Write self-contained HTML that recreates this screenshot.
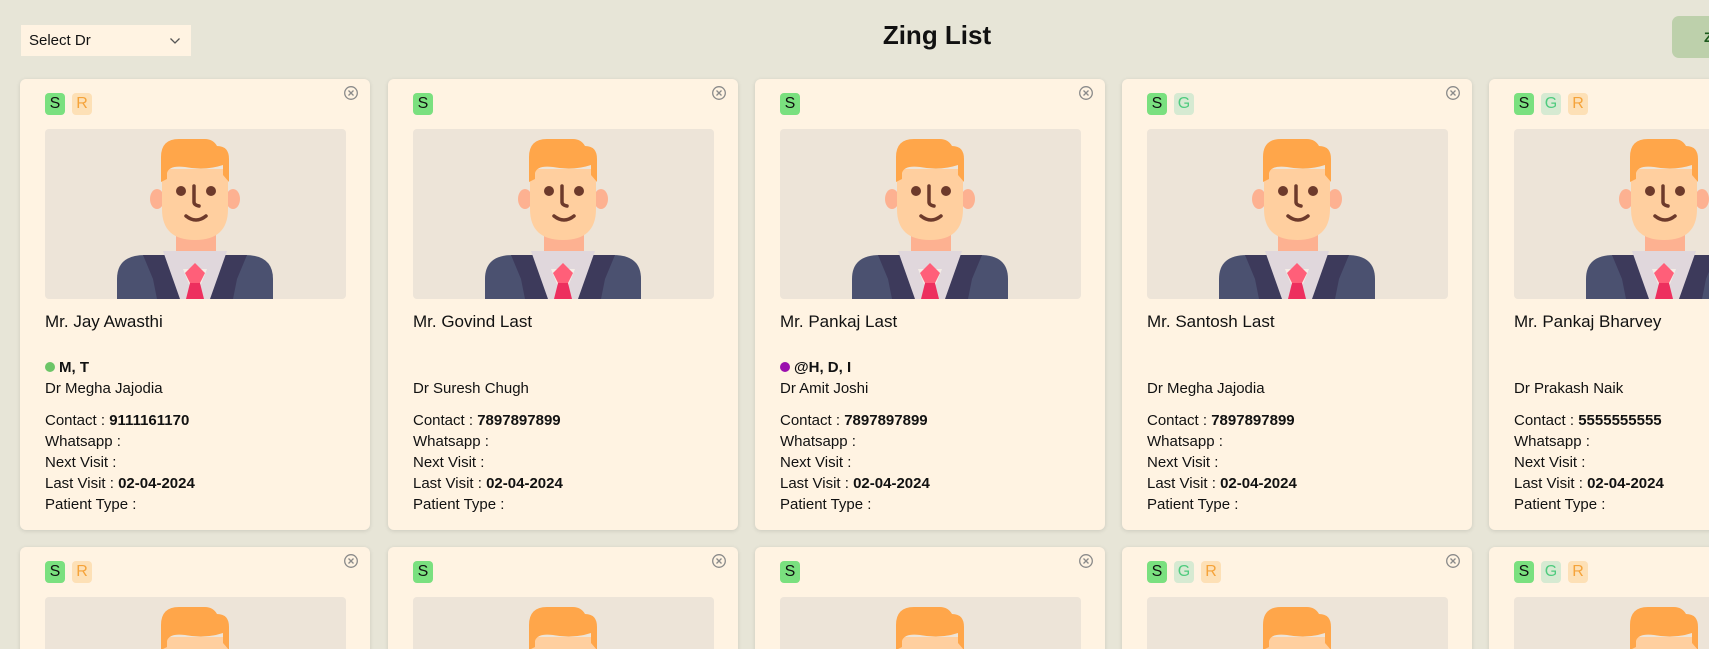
<!DOCTYPE html>
<html style="width:1709px;height:649px;overflow:hidden"><head><meta charset="utf-8"><style>
*{box-sizing:border-box;margin:0;padding:0}
body{width:1709px;height:649px;overflow:hidden;background:#e7e5d7;font-family:"Liberation Sans",sans-serif;color:#111;position:relative}
.sel{position:absolute;left:21px;top:25px;width:170px;height:31px;background:#fff3e2;font-size:15px;line-height:31px;padding-left:8px}
.sel svg{position:absolute;left:148px;top:12px}
h1{position:absolute;left:0;width:1874px;text-align:center;top:20px;font-size:26px;font-weight:bold}
.btn{position:absolute;left:1672px;top:16px;width:120px;height:42px;background:#bdd0ab;border-radius:7px;color:#1d5a1d;font-weight:bold;font-size:14px;line-height:42px;padding-left:32px}
.card{position:absolute;width:350px;height:451px;background:#fff3e2;border-radius:6px;box-shadow:0 1px 4px rgba(0,0,0,.12)}
.badges{position:absolute;left:25px;top:14px;display:flex;gap:7px}
.b{height:22px;min-width:20px;padding:0 3px;border-radius:4px;font-size:16px;line-height:22px;text-align:center}
.bs{background:#7ae07f;color:#111}.bg{background:#d6ead2;color:#4fcb7e}.br{background:#fde0b6;color:#f5a33a}
.x{position:absolute;left:323px;top:6px}
.img{position:absolute;left:25px;top:50px;width:301px;height:170px;background:#ede4d8;border-radius:4px;overflow:hidden}
.t{position:absolute;left:25px;font-size:15px;line-height:21px;white-space:nowrap}
.nm{top:232px;font-size:17px;line-height:22px}
.dot{display:inline-block;width:10px;height:10px;border-radius:50%;margin-right:4px;vertical-align:-0px}
</style></head><body>
<div class="sel">Select Dr<svg width="12" height="8" viewBox="0 0 12 8"><path d="M1.5 1.5l4.5 4.5 4.5-4.5" fill="none" stroke="#555" stroke-width="1.3"/></svg></div>
<h1>Zing List</h1>
<div class="btn">Z</div>

<svg width="0" height="0" style="position:absolute">
<defs>
<g id="av">
<path d="M72 170V150Q72 126 100 126H200Q228 126 228 150V170Z" fill="#4b5170"/>
<path d="M98 126L122 126L150 170L112 170L108 150Z" fill="#3d3a5b"/>
<path d="M202 126L178 126L150 170L188 170L192 150Z" fill="#3d3a5b"/>
<rect x="131" y="98" width="40" height="30" fill="#fdb191"/>
<path d="M118 122L182 122L165 170L135 170Z" fill="#e0d7dc"/>
<path d="M138 140L150 170L162 140Z" fill="#f4ede6"/>
<path d="M150 134L140 144L145 154L155 154L160 144Z" fill="#ff5f79"/>
<path d="M145 154L141 170L159 170L155 154Z" fill="#ed2f5e"/>
<ellipse cx="112" cy="70" rx="7" ry="10" fill="#fdb191"/>
<ellipse cx="188" cy="70" rx="7" ry="10" fill="#fdb191"/>
<path d="M117 40H183V80Q183 111 150 111Q117 111 117 80Z" fill="#ffcf9f"/>
<path d="M116 53V28Q116 10 134 10H160Q168 10 172 17Q184 17 184 30V53L178 46V36Q160 42 140 38Q124 36 122 44V50Z" fill="#ffa64a"/>
<circle cx="136" cy="62" r="5" fill="#6d3a2b"/>
<circle cx="166" cy="62" r="5" fill="#6d3a2b"/>
<path d="M149 57V73Q149 76 154 77" fill="none" stroke="#6d3a2b" stroke-width="3.5" stroke-linecap="round"/>
<path d="M141 87Q151 95 161 87" fill="none" stroke="#6d3a2b" stroke-width="3.5" stroke-linecap="round"/>
</g>
<g id="xi"><circle cx="8" cy="8" r="6.3" fill="none" stroke="#8a8a8a" stroke-width="1.3"/><path d="M5.5 5.5l5 5M10.5 5.5l-5 5" stroke="#8a8a8a" stroke-width="1.3"/></g>
</defs></svg>

<div class="card" style="left:20px;top:79px">
<div class="badges"><span class="b bs">S</span><span class="b br">R</span></div>
<svg class="x" width="16" height="16"><use href="#xi"/></svg>
<div class="img"><svg width="301" height="170"><use href="#av"/></svg></div>
<div class="t nm">Mr. Jay Awasthi</div>
<div class="t" style="top:278px;font-weight:bold"><span class="dot" style="background:#6cc567"></span>M, T</div>
<div class="t" style="top:299px">Dr Megha Jajodia</div>
<div class="t" style="top:331px">Contact : <b>9111161170</b></div>
<div class="t" style="top:352px">Whatsapp :</div>
<div class="t" style="top:373px">Next Visit :</div>
<div class="t" style="top:394px">Last Visit : <b>02-04-2024</b></div>
<div class="t" style="top:415px">Patient Type :</div>
</div>

<div class="card" style="left:388px;top:79px">
<div class="badges"><span class="b bs">S</span></div>
<svg class="x" width="16" height="16"><use href="#xi"/></svg>
<div class="img"><svg width="301" height="170"><use href="#av"/></svg></div>
<div class="t nm">Mr. Govind Last</div>
<div class="t" style="top:299px">Dr Suresh Chugh</div>
<div class="t" style="top:331px">Contact : <b>7897897899</b></div>
<div class="t" style="top:352px">Whatsapp :</div>
<div class="t" style="top:373px">Next Visit :</div>
<div class="t" style="top:394px">Last Visit : <b>02-04-2024</b></div>
<div class="t" style="top:415px">Patient Type :</div>
</div>

<div class="card" style="left:755px;top:79px">
<div class="badges"><span class="b bs">S</span></div>
<svg class="x" width="16" height="16"><use href="#xi"/></svg>
<div class="img"><svg width="301" height="170"><use href="#av"/></svg></div>
<div class="t nm">Mr. Pankaj Last</div>
<div class="t" style="top:278px;font-weight:bold"><span class="dot" style="background:#9b0fae"></span>@H, D, I</div>
<div class="t" style="top:299px">Dr Amit Joshi</div>
<div class="t" style="top:331px">Contact : <b>7897897899</b></div>
<div class="t" style="top:352px">Whatsapp :</div>
<div class="t" style="top:373px">Next Visit :</div>
<div class="t" style="top:394px">Last Visit : <b>02-04-2024</b></div>
<div class="t" style="top:415px">Patient Type :</div>
</div>

<div class="card" style="left:1122px;top:79px">
<div class="badges"><span class="b bs">S</span><span class="b bg">G</span></div>
<svg class="x" width="16" height="16"><use href="#xi"/></svg>
<div class="img"><svg width="301" height="170"><use href="#av"/></svg></div>
<div class="t nm">Mr. Santosh Last</div>
<div class="t" style="top:299px">Dr Megha Jajodia</div>
<div class="t" style="top:331px">Contact : <b>7897897899</b></div>
<div class="t" style="top:352px">Whatsapp :</div>
<div class="t" style="top:373px">Next Visit :</div>
<div class="t" style="top:394px">Last Visit : <b>02-04-2024</b></div>
<div class="t" style="top:415px">Patient Type :</div>
</div>

<div class="card" style="left:1489px;top:79px">
<div class="badges"><span class="b bs">S</span><span class="b bg">G</span><span class="b br">R</span></div>
<div class="img"><svg width="301" height="170"><use href="#av"/></svg></div>
<div class="t nm">Mr. Pankaj Bharvey</div>
<div class="t" style="top:299px">Dr Prakash Naik</div>
<div class="t" style="top:331px">Contact : <b>5555555555</b></div>
<div class="t" style="top:352px">Whatsapp :</div>
<div class="t" style="top:373px">Next Visit :</div>
<div class="t" style="top:394px">Last Visit : <b>02-04-2024</b></div>
<div class="t" style="top:415px">Patient Type :</div>
</div>

<div class="card" style="left:20px;top:547px">
<div class="badges"><span class="b bs">S</span><span class="b br">R</span></div>
<svg class="x" width="16" height="16"><use href="#xi"/></svg>
<div class="img"><svg width="301" height="170"><use href="#av"/></svg></div>
</div>
<div class="card" style="left:388px;top:547px">
<div class="badges"><span class="b bs">S</span></div>
<svg class="x" width="16" height="16"><use href="#xi"/></svg>
<div class="img"><svg width="301" height="170"><use href="#av"/></svg></div>
</div>
<div class="card" style="left:755px;top:547px">
<div class="badges"><span class="b bs">S</span></div>
<svg class="x" width="16" height="16"><use href="#xi"/></svg>
<div class="img"><svg width="301" height="170"><use href="#av"/></svg></div>
</div>
<div class="card" style="left:1122px;top:547px">
<div class="badges"><span class="b bs">S</span><span class="b bg">G</span><span class="b br">R</span></div>
<svg class="x" width="16" height="16"><use href="#xi"/></svg>
<div class="img"><svg width="301" height="170"><use href="#av"/></svg></div>
</div>
<div class="card" style="left:1489px;top:547px">
<div class="badges"><span class="b bs">S</span><span class="b bg">G</span><span class="b br">R</span></div>
<div class="img"><svg width="301" height="170"><use href="#av"/></svg></div>
</div>
</body></html>
